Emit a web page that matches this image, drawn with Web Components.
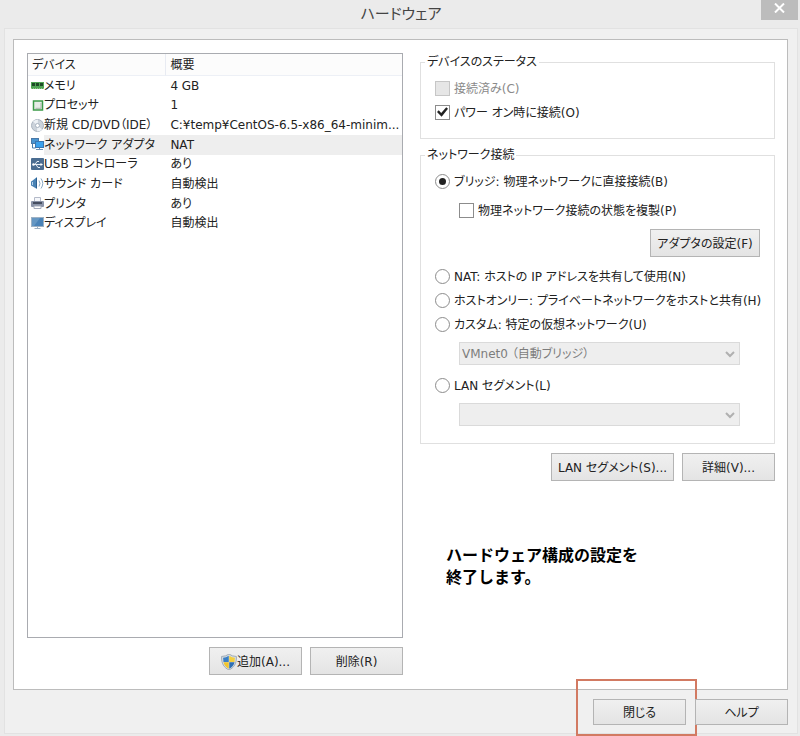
<!DOCTYPE html>
<html lang="ja">
<head>
<meta charset="utf-8">
<title>ハードウェア</title>
<style>
  body {
    margin: 0;
    background: #ebebeb;
    color: #222;
    font: 12px/18px "DejaVu Sans", "Noto Sans CJK JP", sans-serif;
    font-feature-settings: "palt";
  }
</style>
</head>
<body>
<hardware-dialog heading="ハードウェア">
  <device-list slot="devices"></device-list>
  <push-button slot="device-actions" icon="shield">追加(A)...</push-button>
  <push-button slot="device-actions">削除(R)</push-button>

  <group-box slot="settings" heading="デバイスのステータス" class="status">
    <check-option type="checkbox" disabled>接続済み(C)</check-option>
    <check-option type="checkbox" checked>パワー オン時に接続(O)</check-option>
  </group-box>
  <network-settings slot="settings"></network-settings>
  <push-button slot="network-actions" class="wide">LAN セグメント(S)...</push-button>
  <push-button slot="network-actions">詳細(V)...</push-button>
  <side-note slot="note">ハードウェア構成の設定を<br>終了します。</side-note>

  <push-button slot="footer" marked>閉じる</push-button>
  <push-button slot="footer">ヘルプ</push-button>
</hardware-dialog>

<script>
const icons = {
  memory: `<rect x="0" y="3" width="13" height="7" fill="#4fa554"/><path d="M1 4h3v3H1zM5 4h3v3H5zM9 4h3v3H9z" fill="#1d4a26"/><path d="M0 9.500h13" stroke="#8fc987" stroke-dasharray="1 1"/>`,
  cpu: `<rect x="2.500" y="2" width="9" height="9" fill="#e6ece6" stroke="#3c9a48" stroke-width="1.500"/><path d="M4.500 9.300h5.500V4" fill="none" stroke="#aab8aa"/>`,
  disc: `<circle cx="6.500" cy="6.500" r="6" fill="#ccd3db" stroke="#a9b3bf"/><path d="M6.500 6.500L2 2.500A6 6 0 0 1 7 .8zM6.500 6.500l4.500 4a6 6 0 0 1-5 1.800z" fill="#eef2f6"/><circle cx="6.500" cy="6.500" r="2" fill="#fff" stroke="#a9b4c1"/>`,
  network: `<rect x="0.500" y="0.500" width="7" height="5" fill="#4a94d0" stroke="#4a79a8"/><path d="M1.500 6v4h3" fill="none" stroke="#4c7dac"/><rect x="4.500" y="3.500" width="8" height="6" fill="#3aa0ec" stroke="#3a76b0"/><path d="M8.500 10v1M5 11.500h7" stroke="#6f93b8"/>`,
  usb: `<rect width="13" height="12" rx="1" fill="#4b6d91"/><path d="M2 6.500h8M4 6.500l2-3h2M5 6.500l2 3h2" fill="none" stroke="#e8eef5"/><path d="M12 6.500L9.500 5v3z" fill="#fff"/><circle cx="2.500" cy="6.500" r="1.300" fill="#fff"/>`,
  sound: `<path d="M0 5q0-1 1-1l5-4v12L1 9Q0 9 0 8z" fill="#4a83b5"/><path d="M1.500 5v3" stroke="#b9d5ec"/><path d="M5.500 1v10" stroke="#2c5f90"/><path d="M8 3.500q2 3 0 6M10 1.500q3.500 5 0 10" fill="none" stroke="#8aa9c4"/>`,
  printer: `<path d="M3.500 .5h6v4h-6z" fill="#f5f7fb" stroke="#b4bac8"/><rect y="4" width="13" height="6" rx="1" fill="#8a93a8"/><path d="M2 6h9" stroke="#454d60" stroke-width="2"/><path d="M3 9h7v2.500H3z" fill="#fff" stroke="#a3aabb"/>`,
  display: `<rect x="0.500" y="0.500" width="12" height="9" fill="#4a83b8" stroke="#9db1c4"/><path d="M1 1h8L3 9H1z" fill="#6597c3"/><path d="M6.500 10v1M3.500 11.500h6" stroke="#a0b1c2"/>`,
  shield: `<path d="M6.500 0Q9 2 12.500 2C12.800 8 10.500 11 6.500 13C2.500 11 .2 8 .5 2Q4 2 6.500 0z" fill="#d7dde3" stroke="#8b98a5" stroke-width=".6"/><path d="M6.300 1.500Q4 3 1.700 3L2 6.500h4.300z" fill="#3a7fc4"/><path d="M6.700 1.500Q9 3 11.300 3L11 6.500H6.700z" fill="#f3cf3f"/><path d="M2 6.700h4.300V12Q2.800 10 2 6.700z" fill="#f0c52f"/><path d="M11 6.700H6.700V12Q10.200 10 11 6.700z" fill="#2f6fb4"/>`
};

const icon = (name, size = 13) =>
  `<svg width="${size}" height="${size}" viewBox="0 0 13 13" aria-hidden="true">${icons[name]}</svg>`;

class PushButton extends HTMLElement {
  constructor() {
    super();
    const name = this.getAttribute("icon");
    this.attachShadow({mode: "open"}).innerHTML = `
<style>
    :host {
        display: block;
        position: relative;
        min-width: 93px;
    }
    :host(.wide) {
        min-width: 123px;
    }
    button {
        display: flex;
        align-items: center;
        justify-content: center;
        width: 100%;
        height: 28px;
        padding: 2px 4px 0;
        border: 1px solid #b4b4b4;
        background: linear-gradient(#f0f0f0, #e4e4e4);
        color: inherit;
        font: inherit;
        font-feature-settings: inherit;
        white-space: nowrap;
    }
    :host([slot="footer"]) button {
        height: 26px;
    }
    /* frame that points the reader at the button */
    :host([marked])::after {
        content: "";
        position: absolute;
        inset: -20px -11px -11px -17px;
        border: 2px solid #d27a62;
        pointer-events: none;
    }
</style>
<button type="button">${name ? icon(name, 16) : ""}<slot></slot></button>`;
  }
}

class CheckOption extends HTMLElement {
  constructor() {
    super();
    const type = this.getAttribute("type");
    const state = ["checked", "disabled"].filter(a => this.hasAttribute(a)).join(" ");
    this.attachShadow({mode: "open"}).innerHTML = `
<style>
    :host {
        display: flex;
        align-items: center;
        gap: 4px;
        height: 24px;
        white-space: nowrap;
    }
    :host([disabled]) {
        color: #8a8a8a;
    }
    label {
        padding-top: 2px;
    }
    input {
        appearance: none;
        display: grid;
        place-items: center;
        flex: none;
        width: 15px;
        height: 15px;
        margin: 0;
        border: 1px solid #8c8c8c;
        background: #fff;
    }
    input:disabled {
        border-color: #c6c6c6;
        background: #e6e6e6;
    }
    input[type="radio"] {
        border-radius: 50%;
    }
    input[type="radio"]:checked::before {
        content: "";
        width: 7px;
        height: 7px;
        border-radius: 50%;
        background: #222;
    }
    input[type="checkbox"]:checked::before {
        content: "";
        width: 11px;
        height: 11px;
        background: #222;
        clip-path: polygon(0 50%, 16% 34%, 38% 60%, 84% 6%, 100% 20%, 42% 94%);
    }
</style>
<input id="box" type="${type}" ${state}>
<label for="box"><slot></slot></label>`;
    this.input = this.shadowRoot.querySelector("input");
    this.input.onchange = () => {
      this.dispatchEvent(new CustomEvent("picked", {bubbles: true, composed: true}));
    };
  }
}

class DropDown extends HTMLElement {
  constructor() {
    super();
    this.attachShadow({mode: "open"}).innerHTML = `
<style>
    :host {
        display: grid;
        align-items: center;
        color: #7d7d7d;
    }
    select, svg {
        grid-area: 1 / 1;
    }
    select {
        appearance: none;
        width: 100%;
        height: 23px;
        padding: 0 20px 0 2px;
        border: 1px solid #dadada;
        border-radius: 0;
        background: #eee;
        color: inherit;
        font: inherit;
        font-feature-settings: inherit;
        opacity: 1;
    }
    svg {
        justify-self: end;
        margin-right: 5px;
        pointer-events: none;
    }
</style>
<select disabled aria-label="${this.getAttribute("label")}"><option>${this.getAttribute("value") || ""}</option></select>
<svg width="10" height="8" viewBox="0 0 10 8"><path d="M1 2l4 4 4-4" fill="none" stroke="#b0b0b0" stroke-width="2"/></svg>`;
  }
}

class GroupBox extends HTMLElement {
  constructor() {
    super();
    this.attachShadow({mode: "open"}).innerHTML = `
<style>
    :host {
        display: block;
    }
    fieldset {
        min-width: 0;
        margin: 0;
        padding: 5px 14px 14px;
        border: 1px solid #e0e0e0;
    }
    legend {
        margin-left: -10px;
        padding: 0 2px;
    }
</style>
<fieldset><legend>${this.getAttribute("heading")}</legend><slot></slot></fieldset>`;
  }
}

class NetworkSettings extends HTMLElement {
  constructor() {
    super();
    this.attachShadow({mode: "open"}).innerHTML = `
<style>
    :host {
        display: block;
    }
    .indent {
        margin-left: 24px;
    }
    .copy {
        margin-top: 5px;
    }
    push-button {
        width: 110px;
        margin: 7px 0 7px auto;
    }
    drop-down {
        margin: 6px 20px 8px 24px;
    }
    drop-down:last-child {
        margin-bottom: 3px;
    }
</style>
<group-box heading="ネットワーク接続">
    <check-option type="radio" checked>ブリッジ: 物理ネットワークに直接接続(B)</check-option>
    <check-option type="checkbox" class="indent copy">物理ネットワーク接続の状態を複製(P)</check-option>
    <push-button>アダプタの設定(F)</push-button>
    <check-option type="radio">NAT: ホストの IP アドレスを共有して使用(N)</check-option>
    <check-option type="radio">ホストオンリー: プライベートネットワークをホストと共有(H)</check-option>
    <check-option type="radio">カスタム: 特定の仮想ネットワーク(U)</check-option>
    <drop-down label="カスタム" value="VMnet0 （自動ブリッジ）"></drop-down>
    <check-option type="radio">LAN セグメント(L)</check-option>
    <drop-down label="LAN セグメント"></drop-down>
</group-box>`;

    // radios live in separate shadow roots, so the group is kept here
    const radios = [...this.shadowRoot.querySelectorAll("check-option[type=radio]")];
    this.shadowRoot.addEventListener("picked", e => {
      if (radios.includes(e.target)) {
        radios.forEach(r => { r.input.checked = r === e.target; });
      }
    });
  }
}

const devices = [
  ["memory", "メモリ", "4 GB"],
  ["cpu", "プロセッサ", "1"],
  ["disc", "新規 CD/DVD（IDE）", "C:¥temp¥CentOS-6.5-x86_64-minim..."],
  ["network", "ネットワーク アダプタ", "NAT"],
  ["usb", "USB コントローラ", "あり"],
  ["sound", "サウンド カード", "自動検出"],
  ["printer", "プリンタ", "あり"],
  ["display", "ディスプレイ", "自動検出"]
];

class DeviceList extends HTMLElement {
  constructor() {
    super();
    this.attachShadow({mode: "open"}).innerHTML = `
<style>
    :host {
        display: block;
        border: 1px solid #a9abb0;
        background: #fff;
        overflow: hidden;
    }
    table {
        width: 100%;
        height: 179px;
        border-collapse: separate;
        border-spacing: 0;
        table-layout: fixed;
    }
    th, td {
        padding: 0 0 0 4px;
        text-align: left;
        font-weight: normal;
        white-space: nowrap;
    }
    th {
        height: 22px;
        box-sizing: border-box;
        border-bottom: 1px solid #edf0f6;
        background: #fcfcfc;
    }
    th:first-child {
        width: 37%;
        border-right: 1px solid #e8ebf2;
    }
    td:first-child {
        padding-left: 3px;
    }
    .name {
        display: flex;
        align-items: center;
    }
    svg {
        flex: none;
    }
    .selected td {
        background: #eee;
    }
    .selected td:first-child {
        background: linear-gradient(90deg, #fff 16px, #eee 16px);
    }
</style>
<table>
    <thead><tr><th>デバイス</th><th>概要</th></tr></thead>
    <tbody>${devices.map(([name, label, summary]) => `
        <tr${name === "network" ? ` class="selected"` : ""}><td><div class="name">${icon(name)}<span>${label}</span></div></td><td>${summary}</td></tr>`).join("")}
    </tbody>
</table>`;
  }
}

class SideNote extends HTMLElement {
  constructor() {
    super();
    this.attachShadow({mode: "open"}).innerHTML = `
<style>
    :host {
        display: block;
        color: #000;
        font: bold 16px/22px "Noto Sans CJK JP", sans-serif;
        font-feature-settings: normal;
    }
</style>
<slot></slot>`;
  }
}

class HardwareDialog extends HTMLElement {
  constructor() {
    super();
    this.attachShadow({mode: "open"}).innerHTML = `
<style>
    :host {
        display: flex;
        flex-direction: column;
        box-sizing: border-box;
        min-height: 100vh;
        padding: 0 2px 2px 4px;
    }
    header {
        display: grid;
        grid-template-columns: 1fr auto 1fr;
        height: 28px;
    }
    h1 {
        grid-column: 2;
        margin: 0;
        color: #444;
        font-size: 15px;
        font-weight: normal;
        line-height: 28px;
    }
    .close {
        justify-self: end;
        display: grid;
        place-items: center;
        width: 37px;
        height: 20px;
        padding: 0 0 4px;
        border: 0;
        background: #bcbcbc;
    }
    .frame {
        flex: 1;
        display: flex;
        flex-direction: column;
        padding: 10px 9px 8px 8px;
        border: 1px solid #e2e2e2;
        background: #f0f0f0;
    }
    main {
        flex: 1;
        display: grid;
        grid-template-columns: 376fr 355fr;
        gap: 17px;
        padding: 13px 12px 14px 13px;
        border: 1px solid #bcbcbc;
        background: #fff;
    }
    .left, .right {
        display: flex;
        flex-direction: column;
        min-width: 0;
    }
    slot[name="devices"]::slotted(*) {
        flex: 1;
    }
    .actions, footer {
        display: flex;
        justify-content: flex-end;
        gap: 8px;
        margin-top: 9px;
    }
    slot[name="settings"]::slotted(.status) {
        margin-bottom: 7px;
    }
    slot[name="note"]::slotted(*) {
        margin: 62px 0 0 26px;
    }
    footer {
        gap: 9px;
    }
</style>
<header>
    <h1>${this.getAttribute("heading")}</h1>
    <button class="close" type="button" aria-label="閉じる"><svg width="11" height="10" viewBox="0 0 11 10"><path d="M1 .5l9 9M10 .5l-9 9" stroke="#fff" stroke-width="2"/></svg></button>
</header>
<div class="frame">
    <main>
        <div class="left">
            <slot name="devices"></slot>
            <div class="actions"><slot name="device-actions"></slot></div>
        </div>
        <div class="right">
            <slot name="settings"></slot>
            <div class="actions"><slot name="network-actions"></slot></div>
            <slot name="note"></slot>
        </div>
    </main>
    <footer><slot name="footer"></slot></footer>
</div>`;
  }
}

window.customElements.define("push-button", PushButton);
window.customElements.define("check-option", CheckOption);
window.customElements.define("drop-down", DropDown);
window.customElements.define("group-box", GroupBox);
window.customElements.define("network-settings", NetworkSettings);
window.customElements.define("device-list", DeviceList);
window.customElements.define("side-note", SideNote);
window.customElements.define("hardware-dialog", HardwareDialog);
</script>
</body>
</html>
